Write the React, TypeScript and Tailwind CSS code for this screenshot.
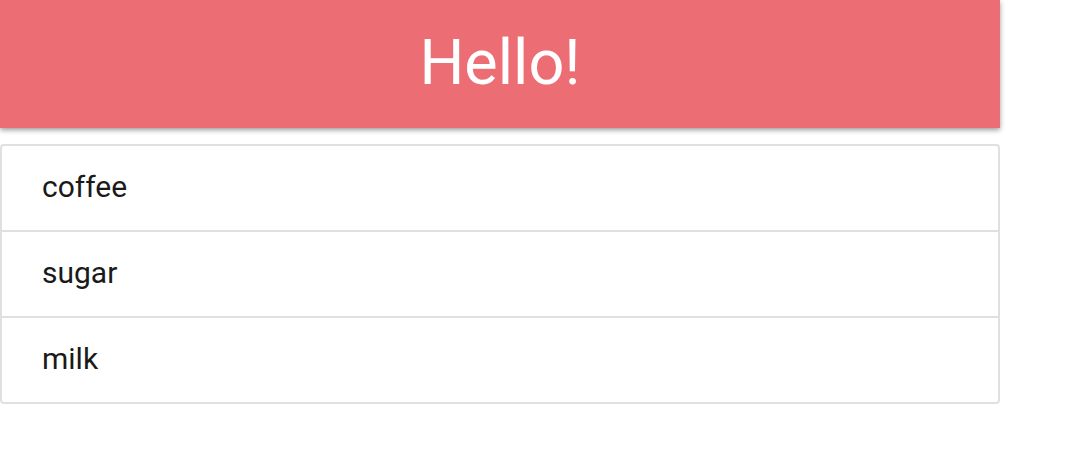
const items = ["coffee", "sugar", "milk"];

export default function App() {
  return (
    <div className="min-h-screen bg-white font-['Roboto',sans-serif]">
      <header className="w-[1000px] h-[128px] bg-[#ec6e74] flex items-center justify-center shadow-[0_2px_5px_rgba(0,0,0,0.4)]">
        <h1 className="text-white text-[63px] font-normal pb-[2px]">Hello!</h1>
      </header>
      <ul className="mt-[16px] w-[1000px] border-2 border-[#e0e0e0] rounded-[4px]">
        {items.map((item, i) => (
          <li
            key={item}
            className={
              i < items.length - 1
                ? "h-[86px] flex items-center pl-[40px] pb-[4px] text-[30px] text-[#1a1a1a] border-b-2 border-[#e0e0e0]"
                : "h-[84px] flex items-center pl-[40px] pb-[4px] text-[30px] text-[#1a1a1a]"
            }
          >
            {item}
          </li>
        ))}
      </ul>
    </div>
  );
}
